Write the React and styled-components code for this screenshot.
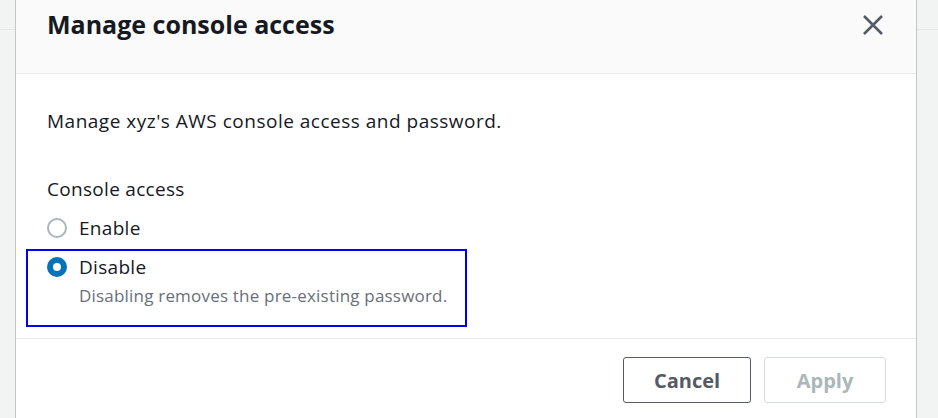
import React, { useState } from 'react';
import styled, { createGlobalStyle } from 'styled-components';

const GlobalStyle = createGlobalStyle`
  html, body {
    margin: 0;
    padding: 0;
    background: #f2f3f3;
    font-family: "Open Sans", "Noto Sans", Arial, sans-serif;
    color: #16191f;
  }
`;

const Backdrop = styled.div`
  display: flex;
  width: 938px;
  height: 418px;
  overflow: hidden;
`;

const Gutter = styled.div`
  flex: ${({ grow }) => (grow ? 1 : 'none')};
  width: ${({ width }) => (width ? `${width}px` : 'auto')};
  background: #f2f3f3;
  &::before {
    content: '';
    display: block;
    height: 29px;
    border-bottom: 1px solid #e6e8e8;
  }
`;

const Dialog = styled.div`
  width: 900px;
  display: flex;
  flex-direction: column;
  background: #ffffff;
  border-left: 1px solid #c4c6c6;
  border-right: 1px solid #c4c6c6;
`;

const Header = styled.div`
  height: 74px;
  box-sizing: border-box;
  display: flex;
  align-items: flex-start;
  justify-content: space-between;
  padding: 8px 31px 0 31px;
  background: #fafafa;
  border-bottom: 1px solid #eaeded;
`;

const Title = styled.h2`
  margin: 0;
  font-size: 25px;
  line-height: 32px;
  font-weight: 700;
  color: #16191f;
`;

const CloseButton = styled.button`
  margin-top: 5px;
  padding: 0;
  width: 24px;
  height: 24px;
  border: none;
  background: transparent;
  display: flex;
  align-items: center;
  justify-content: center;
  cursor: pointer;
`;

const Body = styled.div`
  height: 265px;
  box-sizing: border-box;
  padding: 34px 31px 0 10px;
  border-bottom: 1px solid #eaeded;
`;

const Intro = styled.p`
  margin: 0 0 0 21px;
  font-size: 19px;
  line-height: 26px;
  letter-spacing: 0.5px;
`;

const FieldLabel = styled.div`
  margin: 42px 0 13px 21px;
  font-size: 19px;
  line-height: 26px;
  letter-spacing: 0.3px;
`;

const Options = styled.div`
  display: flex;
  flex-direction: column;
`;

const Option = styled.label`
  display: grid;
  grid-template-columns: 20px auto;
  column-gap: 12px;
  align-items: center;
  width: 441px;
  box-sizing: border-box;
  padding: ${({ highlighted }) => (highlighted ? '3px 0 18px 19px' : '0 0 0 21px')};
  margin-top: ${({ highlighted }) => (highlighted ? '8px' : '0')};
  border: ${({ highlighted }) => (highlighted ? '2px solid #0000f0' : 'none')};
  cursor: pointer;
`;

const Radio = styled.span`
  width: 20px;
  height: 20px;
  box-sizing: border-box;
  border-radius: 50%;
  border: ${({ checked }) => (checked ? '6px solid #0073bb' : '2px solid #aab7b8')};
  background: #ffffff;
`;

const OptionLabel = styled.span`
  font-size: 19px;
  line-height: 26px;
  letter-spacing: 0.3px;
`;

const OptionHint = styled.span`
  grid-column: 2;
  margin-top: 5px;
  font-size: 17px;
  line-height: 22px;
  letter-spacing: 0.2px;
  color: #687078;
`;

const Footer = styled.div`
  display: flex;
  justify-content: flex-end;
  gap: 13px;
  padding: 18px 30px 0 0;
`;

const Button = styled.button`
  height: 46px;
  width: ${({ width }) => width}px;
  box-sizing: border-box;
  border-radius: 3px;
  border: 1px solid ${({ disabled }) => (disabled ? '#d5dbdb' : '#545b64')};
  background: #ffffff;
  color: ${({ disabled }) => (disabled ? '#aab7b8' : '#545b64')};
  font-family: inherit;
  font-size: 20px;
  font-weight: 700;
  cursor: ${({ disabled }) => (disabled ? 'default' : 'pointer')};
`;

const options = [
  { id: 'enable', label: 'Enable' },
  { id: 'disable', label: 'Disable', hint: 'Disabling removes the pre-existing password.' },
];

export default function App() {
  const [access, setAccess] = useState('disable');

  return (
    <>
      <GlobalStyle />
      <Backdrop>
        <Gutter width={15} />
        <Dialog>
          <Header>
            <Title>Manage console access</Title>
            <CloseButton aria-label="Close">
              <svg width="22" height="22" viewBox="0 0 22 22" fill="none">
                <path d="M2 2l18 18M20 2L2 20" stroke="#545b64" strokeWidth="2.6" />
              </svg>
            </CloseButton>
          </Header>
          <Body>
            <Intro>Manage xyz's AWS console access and password.</Intro>
            <FieldLabel>Console access</FieldLabel>
            <Options>
              {options.map((o) => (
                <Option
                  key={o.id}
                  highlighted={access === o.id}
                  onClick={() => setAccess(o.id)}
                >
                  <Radio checked={access === o.id} />
                  <OptionLabel>{o.label}</OptionLabel>
                  {o.hint && <OptionHint>{o.hint}</OptionHint>}
                </Option>
              ))}
            </Options>
          </Body>
          <Footer>
            <Button width={128}>Cancel</Button>
            <Button width={122} disabled>
              Apply
            </Button>
          </Footer>
        </Dialog>
        <Gutter grow />
      </Backdrop>
    </>
  );
}
